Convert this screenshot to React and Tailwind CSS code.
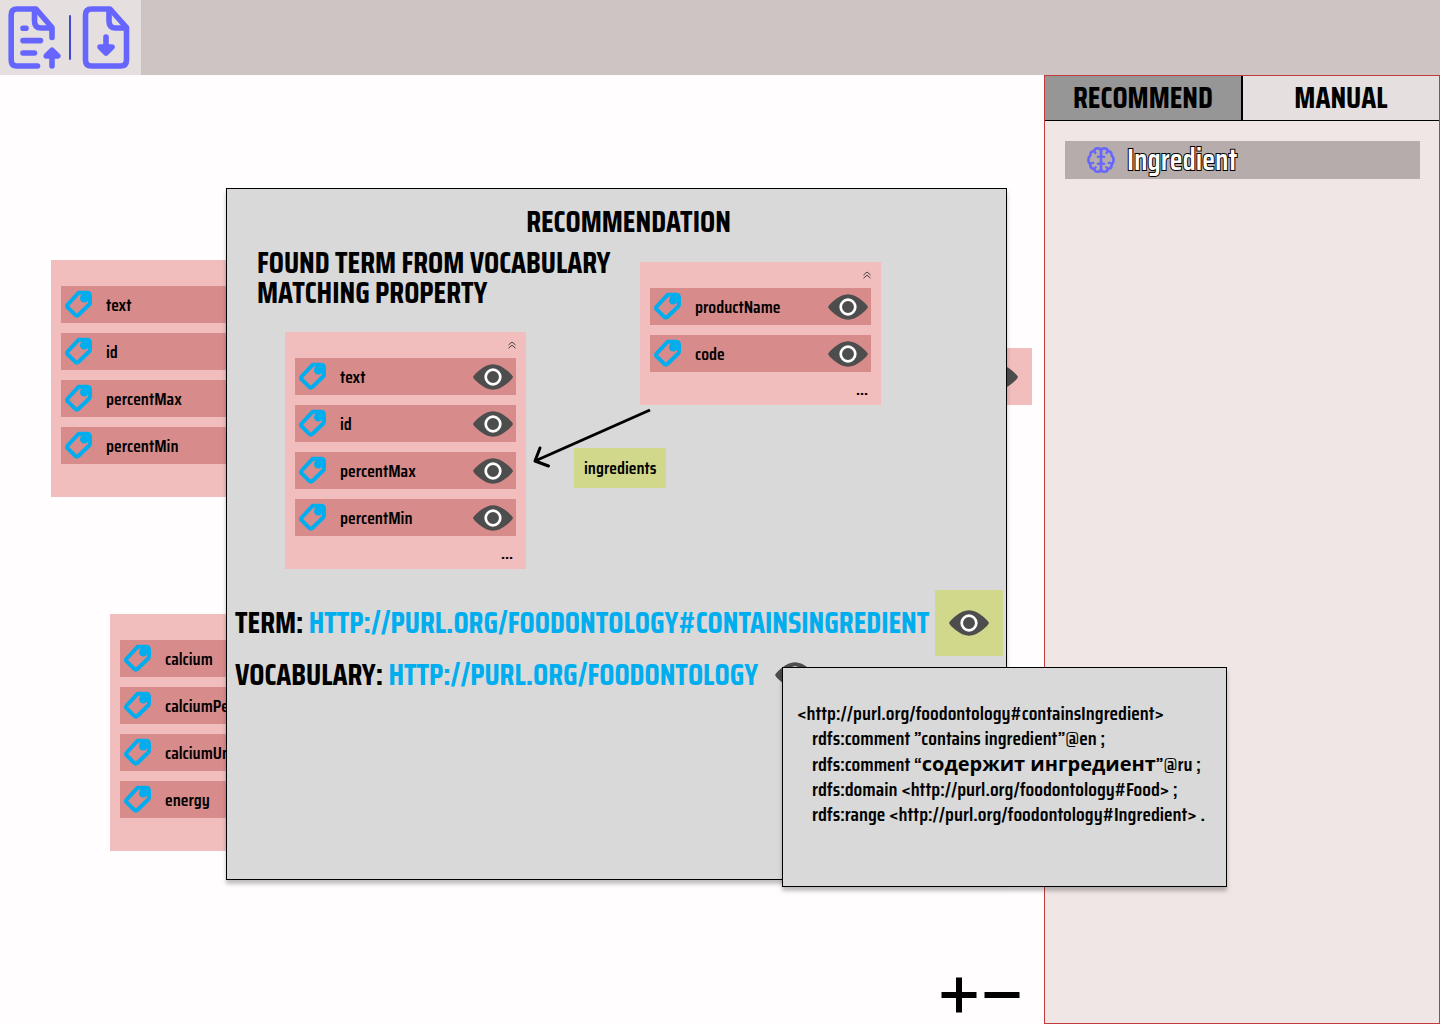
function FileUploadIcon() {
  return (
    <svg width="56" height="66" viewBox="6 4 56 66" fill="none" stroke="#6666ff" strokeWidth="5.6" strokeLinecap="round" strokeLinejoin="round" aria-hidden="true">
      <path d="M37.5 66H17Q11.2 66 11.2 60V15Q11.2 9 17 9H36L52 27.5V37.5" />
      <path d="M34.5 10V21Q34.5 28 41 28H51" />
      <path d="M23 28.2H26M23 40.6H40.5M23 53H34.5" />
      <path d="M52 66V52M46.2 56L52 50.2L57.8 56Z" />
    </svg>
  );
}

function FileDownloadIcon() {
  return (
    <svg width="50" height="66" viewBox="81 4 50 66" fill="none" stroke="#6666ff" strokeWidth="5.6" strokeLinecap="round" strokeLinejoin="round" aria-hidden="true">
      <path d="M110 9H91.5Q85.5 9 85.5 15V60Q85.5 66 91.5 66H120.5Q126.5 66 126.5 60V27.5Z" />
      <path d="M109 10V21Q109 28 115.5 28H125.5" />
      <path d="M106 37V50M100 47L106 53L112 47Z" />
    </svg>
  );
}

function TagIcon() {
  return (
    <svg className="shrink-0" width="29" height="29" viewBox="0 0 29 29" fill="none" aria-hidden="true">
      <path
        d="M14.5 2.8H22.8Q26 2.8 26 6V12.5Q26 13.7 25.2 14.5L14.3 25Q12.7 26.3 11.2 24.9L3.7 17.4Q2.4 15.9 3.7 14.5Z"
        stroke="#00aeef"
        strokeWidth="4"
        strokeLinejoin="round"
      />
      <circle cx="20.3" cy="8.2" r="4.3" fill="#00aeef" />
    </svg>
  );
}

function EyeIcon() {
  return (
    <svg className="shrink-0" width="40" height="26" viewBox="0 0 40 26" aria-hidden="true">
      <path d="M0 13Q1 10.5 6 6.5Q13.5 0.3 20 0.3T34 6.5Q39 10.5 40 13Q39 15.5 34 19.5Q26.5 25.7 20 25.7T6 19.5Q1 15.5 0 13Z" fill="#4d4d4d" />
      <circle cx="20" cy="13" r="7.3" fill="none" stroke="#fff" strokeWidth="2.7" />
    </svg>
  );
}

function BrainIcon() {
  return (
    <svg width="28" height="28" viewBox="0 0 28 28" fill="none" stroke="#6666ff" strokeWidth="2.6" strokeLinecap="round" strokeLinejoin="round" aria-hidden="true">
      <path d="M14 4.5V23.5" />
      <path d="M14 4.5Q13.5 2.2 10.8 2.2Q7.5 2.2 7.3 5Q3.2 5.2 3.3 9.5Q1.4 11 1.4 14T3.3 18.5Q3.2 22.8 7.3 23Q7.5 25.8 10.8 25.8Q13.5 25.8 14 23.5" />
      <path d="M14 4.5Q14.5 2.2 17.2 2.2Q20.5 2.2 20.7 5Q24.8 5.2 24.7 9.5Q26.6 11 26.6 14T24.7 18.5Q24.8 22.8 20.7 23Q20.5 25.8 17.2 25.8Q14.5 25.8 14 23.5" />
      <path d="M7.3 5Q7.4 6.4 8.5 7M20.7 5Q20.6 6.4 19.5 7M10.8 10.8Q13 11 14 9.5Q15 11 17.2 10.8M10.8 17.8Q13 18 14 16.5Q15 18 17.2 17.8M3.3 18.5Q4 16.5 6.3 16.8M24.7 18.5Q24 16.5 21.7 16.8M7.3 23Q7.5 21.5 8.8 21.3M20.7 23Q20.5 21.5 19.2 21.3" strokeWidth="2.2" />
    </svg>
  );
}

function CollapseIcon() {
  return (
    <svg width="8" height="8" viewBox="0 0 8 8" fill="none" stroke="#333" strokeWidth="0.9" aria-hidden="true">
      <path d="M0.5 4L4 1L7.5 4M0.5 7.2L4 4.2L7.5 7.2" />
    </svg>
  );
}

function ClassCard({ properties }) {
  return (
    <div className="w-[241px] bg-[#f1bdbd] px-2.5">
      <div className="flex h-[26px] items-center justify-end">
        <button aria-label="Collapse">
          <CollapseIcon />
        </button>
      </div>
      <ul className="flex flex-col gap-2.5">
        {properties.map((name) => (
          <li key={name} className="flex h-[37px] items-center bg-[#d88b8b] px-[3px]">
            <TagIcon />
            <span className="ml-[13px] flex-1 text-lg/6 font-semibold">{name}</span>
            <button aria-label={`Show ${name}`}>
              <EyeIcon />
            </button>
          </li>
        ))}
      </ul>
      <div className="flex h-[33px] items-center justify-end pr-[3px] text-lg/6 font-semibold">
        <button aria-label="More properties">...</button>
      </div>
    </div>
  );
}

const ingredientProperties = ["text", "id", "percentMax", "percentMin"];
const nutrientProperties = ["calcium", "calciumPer100g", "calciumUnit", "energy"];
const productProperties = ["productName", "code"];

function RecommendationDialog() {
  return (
    <section
      aria-labelledby="dialog-title"
      className="absolute top-[113px] left-[226px] min-h-[692px] w-[781px] border border-black bg-[#d9d9d9] shadow-[0_4px_4px_rgba(0,0,0,0.25)]"
    >
      <h1 id="dialog-title" className="pt-[18px] pl-6 text-center text-3xl/[30px] font-bold">
        RECOMMENDATION
      </h1>
      <div className="relative h-[353px] pt-[11px] pl-[30px]">
        <h2 className="w-[360px] text-3xl/[30px] font-bold">FOUND TERM FROM VOCABULARY MATCHING PROPERTY</h2>
        <div className="absolute top-[95px] left-[58px]">
          <ClassCard properties={ingredientProperties} />
        </div>
        <div className="absolute top-[25px] left-[413px]">
          <ClassCard properties={productProperties} />
        </div>
        <svg className="absolute top-[168px] left-[303px]" width="124" height="66" viewBox="530 405 124 66" fill="none" stroke="#000" strokeWidth="3" aria-hidden="true">
          <path d="M650 410L535 461" />
          <path d="M540 448L535 461L548.5 466" strokeLinecap="round" strokeLinejoin="round" />
        </svg>
        <span className="absolute top-[211px] left-[347px] bg-[#d1d88b] px-2.5 py-2 text-lg/6 font-semibold">ingredients</span>
      </div>
      <div className="flex items-center justify-between pr-[3px] pl-2 text-3xl/[30px] font-bold">
        <p>
          TERM:{" "}
          <a href="#term" className="text-[#00aeef]">
            HTTP://PURL.ORG/FOODONTOLOGY#CONTAINSINGREDIENT
          </a>
        </p>
        <button aria-label="Show term" className="bg-[#d1d88b] px-3.5 py-5">
          <EyeIcon />
        </button>
      </div>
      <div className="flex items-center gap-[17px] pt-1 pl-2 text-3xl/[30px] font-bold">
        <p>
          VOCABULARY:{" "}
          <a href="#vocabulary" className="text-[#00aeef]">
            HTTP://PURL.ORG/FOODONTOLOGY
          </a>
        </p>
        <button aria-label="Show vocabulary">
          <EyeIcon />
        </button>
      </div>
    </section>
  );
}

function TermPopup() {
  return (
    <aside className="absolute top-[592px] left-[782px] min-h-[220px] w-[445px] border border-black bg-[#d9d9d9] pt-[33px] pl-3.5 text-xl/[25px] font-semibold shadow-[0_4px_4px_rgba(0,0,0,0.25)]">
      <p>&lt;http://purl.org/foodontology#containsIngredient&gt;</p>
      <div className="pl-[15px] whitespace-nowrap">
        <p>rdfs:comment ”contains ingredient”@en ;</p>
        <p>
          rdfs:comment “<span lang="ru" className="font-['Open_Sans','Noto_Sans',sans-serif] font-bold">содержит ингредиент</span>”@ru ;
        </p>
        <p>rdfs:domain &lt;http://purl.org/foodontology#Food&gt; ;</p>
        <p>rdfs:range &lt;http://purl.org/foodontology#Ingredient&gt; .</p>
      </div>
    </aside>
  );
}

export default function App() {
  return (
    <div className="flex min-h-screen flex-col bg-[#fffdfd] font-['Saira_Condensed','Noto_Sans',sans-serif] text-black">
      <header className="flex h-[75px] bg-[#cec4c3]">
        <div className="flex items-start bg-[#e5dfdf] pt-1 pr-2.5 pl-1.5">
          <button aria-label="Import file">
            <FileUploadIcon />
          </button>
          <div className="mt-[11px] mr-2.5 ml-[7px] h-[45px] w-0.5 rounded-full bg-[#3f48cc]" />
          <button aria-label="Download file">
            <FileDownloadIcon />
          </button>
        </div>
      </header>

      <div className="relative flex flex-1">
        <main className="relative flex-1 overflow-hidden">
          <div className="absolute top-[185px] left-[51px]">
            <ClassCard properties={ingredientProperties} />
          </div>
          <div className="absolute top-[539px] left-[110px]">
            <ClassCard properties={nutrientProperties} />
          </div>
          <div className="absolute top-[273px] left-[791px] flex h-[57px] w-[241px] items-center justify-end bg-[#f1bdbd] pr-3.5">
            <EyeIcon />
          </div>
          <div className="absolute right-6 bottom-[11px] flex gap-[7px]">
            <button aria-label="Zoom in">
              <svg width="36" height="36" viewBox="0 0 36 36" stroke="#000" strokeWidth="6" aria-hidden="true">
                <path d="M0.5 18H35.5M18 0.5V35.5" />
              </svg>
            </button>
            <button aria-label="Zoom out">
              <svg width="36" height="36" viewBox="0 0 36 36" stroke="#000" strokeWidth="6" aria-hidden="true">
                <path d="M0.5 18H35.5" />
              </svg>
            </button>
          </div>
        </main>

        <aside className="w-[396px] border border-[#c13b3b] bg-[#f0e6e6]">
          <div className="flex h-[45px] border-b border-black text-3xl/[30px] font-bold">
            <button className="flex-1 border-r-2 border-black bg-[#969696]">RECOMMEND</button>
            <button className="flex-1 bg-[#e5dfdf]">MANUAL</button>
          </div>
          <div className="p-5 pr-[19px]">
            <button className="flex h-[38px] w-full items-center gap-3 bg-[#b6acab] pl-[22px]">
              <BrainIcon />
              <span className="text-3xl/[30px] font-semibold text-white [-webkit-text-stroke:2px_#000] [paint-order:stroke_fill]">Ingredient</span>
            </button>
          </div>
        </aside>

        <RecommendationDialog />
        <TermPopup />
      </div>
    </div>
  );
}
